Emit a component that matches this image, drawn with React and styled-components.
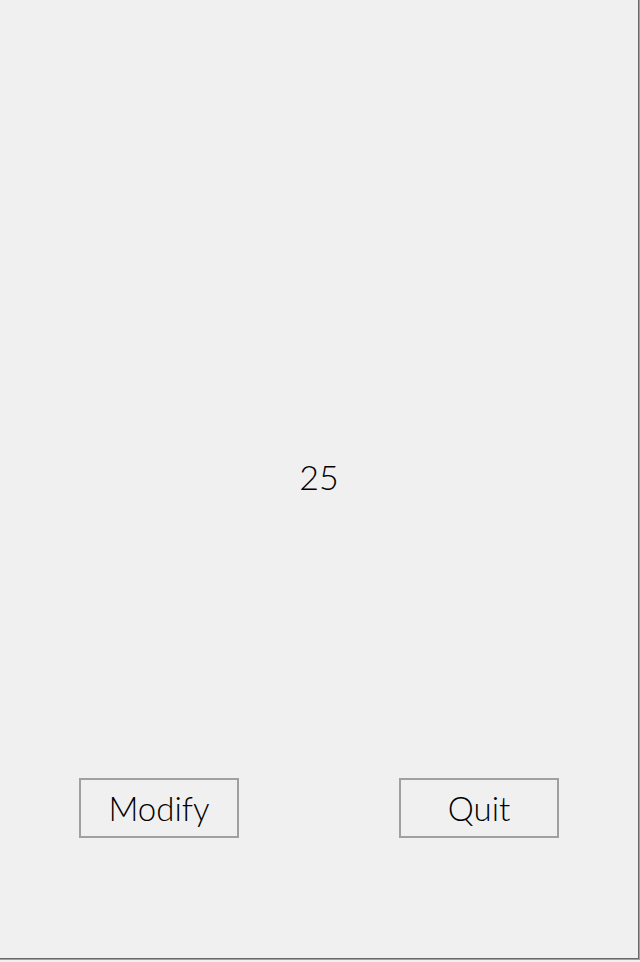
import React from "react";
import styled, { createGlobalStyle } from "styled-components";

const Global = createGlobalStyle`
  html, body { margin: 0; padding: 0; background: #f0f0f0; }
  #root { width: 640px; height: 962px; }
`;

const Frame = styled.div`
  box-sizing: border-box;
  width: 640px;
  height: 960px;
  border-right: 1px solid #a0a0a0;
  border-bottom: 1px solid #a0a0a0;
  background: #f0f0f0;
`;

const Inner = styled.div`
  box-sizing: border-box;
  width: 639px;
  height: 959px;
  border-right: 1px solid #696969;
  border-bottom: 1px solid #696969;
  display: grid;
  grid-template-rows: 1fr 60px 120px;
  font-family: "Lato", "Open Sans", sans-serif;
  font-weight: 300;
  color: #000;
`;

const Value = styled.div`
  display: flex;
  align-items: center;
  justify-content: center;
  font-size: 34px;
  padding-top: 174px;
`;

const Buttons = styled.div`
  display: flex;
  gap: 160px;
  padding-left: 79px;
`;

const Button = styled.button`
  box-sizing: border-box;
  width: 160px;
  height: 60px;
  border: 2px solid #a0a0a0;
  background: #f0f0f0;
  font-family: inherit;
  font-weight: 300;
  font-size: 33px;
  color: #000;
  padding: 0;
  cursor: pointer;
`;

export default function App() {
  return (
    <>
      <Global />
      <Frame>
        <Inner>
          <Value>25</Value>
          <Buttons>
            <Button>Modify</Button>
            <Button>Quit</Button>
          </Buttons>
          <div />
        </Inner>
      </Frame>
    </>
  );
}
